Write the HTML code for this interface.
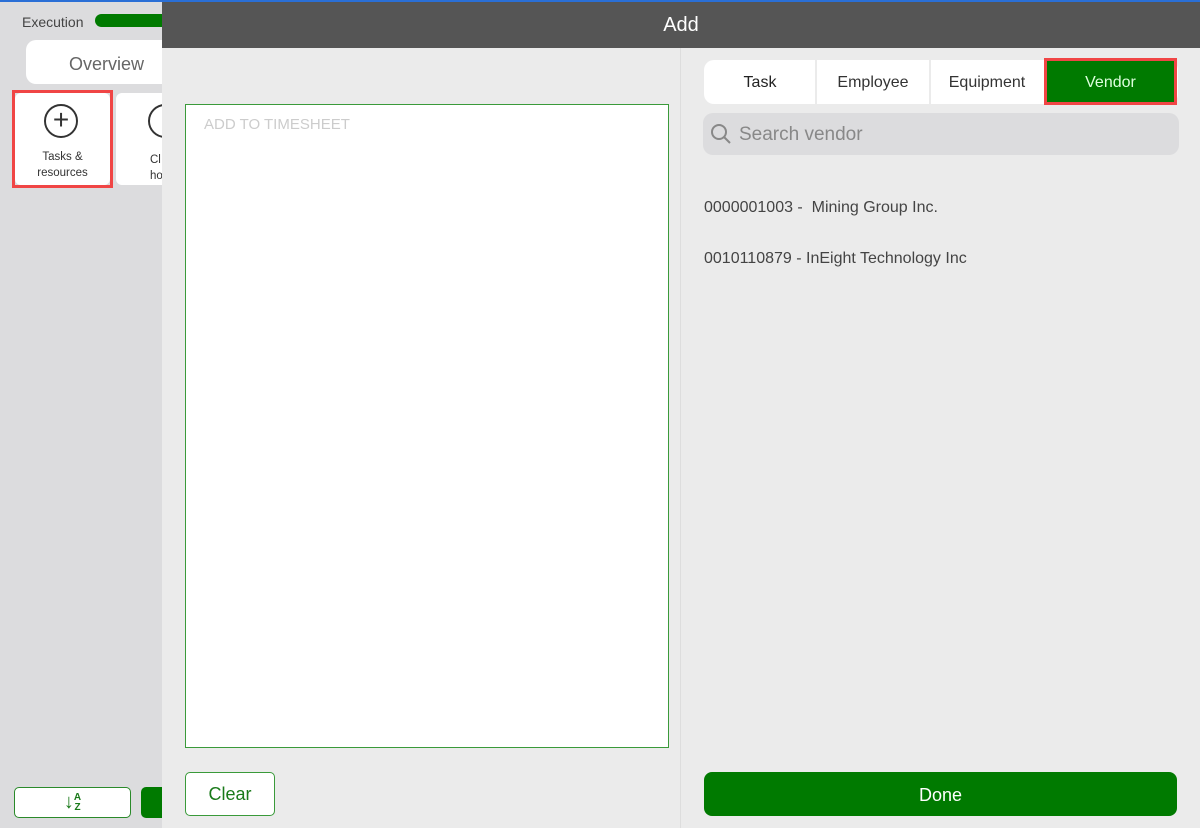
<!DOCTYPE html>
<html><head><meta charset="utf-8"><style>
*{box-sizing:border-box;margin:0;padding:0}
body{width:1200px;height:828px;overflow:hidden;position:relative;font-family:"Liberation Sans",sans-serif;background:#ebebeb}
.a{position:absolute}
</style></head><body>
<div class="a" style="left:0;top:0;width:162px;height:828px;background:#dcdcde"></div>
<div class="a" style="left:0;top:0;width:1200px;height:2px;background:#2a6fd6"></div>
<div class="a" style="left:22px;top:14px;font-size:14px;color:#444">Execution</div>
<div class="a" style="left:95px;top:14px;width:80px;height:13px;border-radius:7px;background:#007a00"></div>
<div class="a" style="left:26px;top:40px;width:150px;height:44px;border-radius:10px;background:#fff"></div>
<div class="a" style="left:69px;top:54px;font-size:18px;color:#666">Overview</div>
<div class="a" style="left:15px;top:93px;width:95px;height:92px;background:#fff;border-radius:6px"></div>
<div class="a" style="left:12px;top:90px;width:101px;height:98px;border:3px solid #f04545"></div>
<div class="a" style="left:44px;top:104px;width:34px;height:34px;border:2px solid #333;border-radius:50%;text-align:center;line-height:28px;font-size:28px;color:#333">+</div>
<div class="a" style="left:15px;top:149px;width:95px;text-align:center;font-size:11.5px;line-height:16px;color:#333">Tasks &amp;<br>resources</div>
<div class="a" style="left:116px;top:93px;width:60px;height:92px;background:#fff;border-radius:6px"></div>
<div class="a" style="left:148px;top:104px;width:34px;height:34px;border:2px solid #333;border-radius:50%"></div>
<div class="a" style="left:150px;top:152px;font-size:11.5px;line-height:16px;color:#333">Cl<br>ho</div>
<div class="a" style="left:14px;top:787px;width:117px;height:31px;border:1.5px solid #2a8a2a;border-radius:5px;background:#fff;color:#1a7a1a;text-align:center;font-size:20px;line-height:28px">↓<span style="font-size:10px;font-weight:bold;display:inline-block;line-height:10px;vertical-align:middle">A<br>Z</span></div>
<div class="a" style="left:141px;top:787px;width:30px;height:31px;background:#007a00;border-radius:5px"></div>

<div class="a" style="left:162px;top:2px;width:1038px;height:46px;background:#555"></div>
<div class="a" style="left:162px;top:14px;width:1038px;text-align:center;color:#fff;font-size:20px">Add</div>
<div class="a" style="left:162px;top:48px;width:518px;height:780px;background:#ebebeb"></div>
<div class="a" style="left:680px;top:48px;width:1px;height:780px;background:#ddd"></div>
<div class="a" style="left:185px;top:104px;width:484px;height:644px;background:#fff;border:1.5px solid #3a9a3a"></div>
<div class="a" style="left:204px;top:116px;font-size:15px;color:#ccc">ADD TO TIMESHEET</div>
<div class="a" style="left:185px;top:772px;width:90px;height:44px;border:1.5px solid #3a9a3a;border-radius:5px;background:#fff;color:#1a7a1a;text-align:center;line-height:43px;font-size:18px">Clear</div>

<div class="a" style="left:704px;top:60px;width:474px;height:44px;background:#fff;border-radius:10px"></div>
<div class="a" style="left:815px;top:60px;width:2px;height:44px;background:#ebebeb"></div>
<div class="a" style="left:929px;top:60px;width:2px;height:44px;background:#ebebeb"></div>
<div class="a" style="left:704px;top:74px;width:112px;text-align:center;font-size:16px;color:#222">Task</div>
<div class="a" style="left:817px;top:74px;width:112px;text-align:center;font-size:16px;color:#333">Employee</div>
<div class="a" style="left:931px;top:74px;width:112px;text-align:center;font-size:16px;color:#333">Equipment</div>
<div class="a" style="left:1044px;top:58px;width:133px;height:47px;background:#007a00;border:3px solid #f04545;color:#dfd;text-align:center;line-height:43px;font-size:16px">Vendor</div>
<div class="a" style="left:703px;top:113px;width:476px;height:42px;background:#dcdcde;border-radius:10px"></div>
<svg class="a" style="left:710px;top:123px" width="22" height="22"><circle cx="9" cy="9" r="7" fill="none" stroke="#888" stroke-width="2"/><line x1="14" y1="14" x2="20" y2="20" stroke="#888" stroke-width="2"/></svg>
<div class="a" style="left:739px;top:124px;font-size:19px;color:#888">Search vendor</div>
<div class="a" style="left:704px;top:199px;font-size:16px;color:#444">0000001003 -&nbsp; Mining Group Inc.</div>
<div class="a" style="left:704px;top:250px;font-size:16px;color:#444">0010110879 - InEight Technology Inc</div>
<div class="a" style="left:704px;top:772px;width:473px;height:44px;background:#007a00;border-radius:8px;color:#fff;text-align:center;line-height:46px;font-size:18px">Done</div>
</body></html>
